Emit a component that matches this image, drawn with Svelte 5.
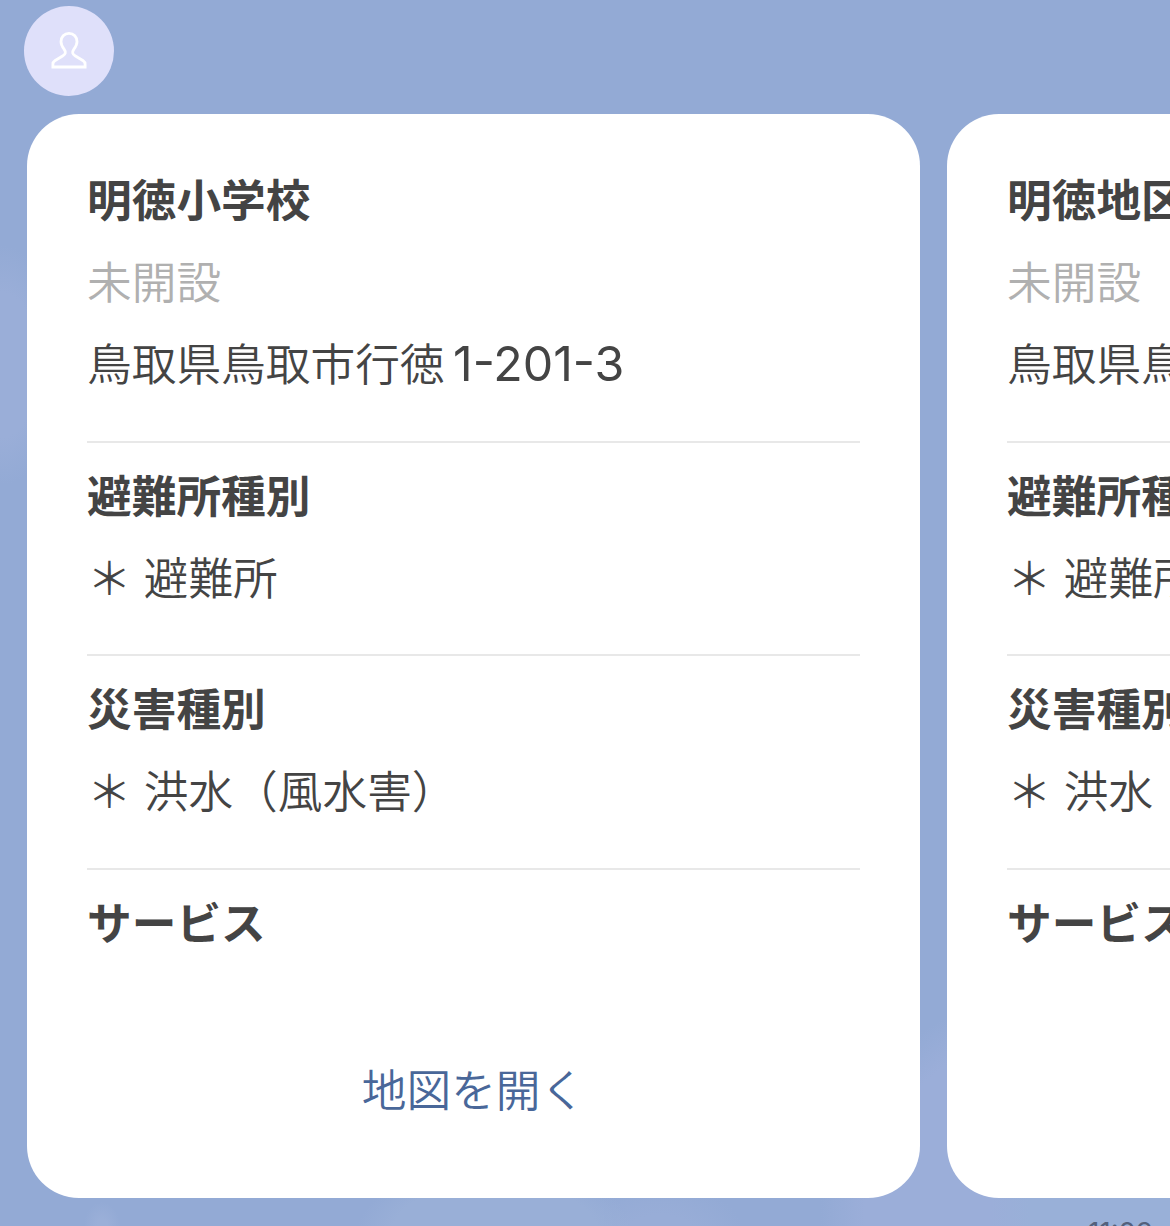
<script lang="ts">
	interface Section {
		title: string;
		items: string[];
	}

	interface Shelter {
		name: string;
		status: string;
		address: string;
		number: string;
		sections: Section[];
	}

	const sections: Section[] = [
		{ title: '避難所種別', items: ['避難所'] },
		{ title: '災害種別', items: ['洪水（風水害）'] },
		{ title: 'サービス', items: [] }
	];

	const shelters: Shelter[] = [
		{ name: '明徳小学校', status: '未開設', address: '鳥取県鳥取市行徳', number: '1-201-3', sections },
		{ name: '明徳地区', status: '未開設', address: '鳥取県鳥取市', number: '', sections }
	];

	const sentAt = '11:09';
</script>

<main class="chat">
	<div class="clouds" aria-hidden="true"></div>

	<header class="sender">
		<div class="avatar">
			<svg viewBox="0 0 90 90" fill="none" stroke="#fff" stroke-width="2.8">
				<path
					d="M45 27.3c-4.8 0-8 3.6-8 8.4 0 3.200 1.200 4.800 3.200 7.700 1 1.400 1.400 2.500 1.100 3.600-.3 1.300-1.100 2.100-2.300 2.800l-8.200 4.900c-1.500.9-1.900 1.900-1.900 3.700v2.600h32.200v-2.600c0-1.800-.4-2.800-1.900-3.700l-8.200-4.900c-1.200-.7-2-1.500-2.300-2.800-.3-1.100.1-2.200 1.100-3.600 2-2.900 3.200-4.500 3.200-7.700 0-4.800-3.200-8.400-8-8.400z"
				/>
			</svg>
		</div>
	</header>

	<div class="carousel">
		{#each shelters as shelter}
			<article class="card">
				<section class="block">
					<h2>{shelter.name}</h2>
					<p class="status">{shelter.status}</p>
					<p>{shelter.address}<span class="number">{shelter.number}</span></p>
				</section>
				{#each shelter.sections as section}
					<section class="block">
						<h2>{section.title}</h2>
						{#each section.items as item}
							<p class="item"><span>＊</span><span>{item}</span></p>
						{/each}
					</section>
				{/each}
				<button type="button">地図を開く</button>
			</article>
		{/each}
	</div>

	<time>{sentAt}</time>
</main>

<style>
	:global(body) {
		margin: 0;
		overflow: hidden;
	}

	.chat {
		position: relative;
		display: flex;
		flex-direction: column;
		box-sizing: border-box;
		width: 1170px;
		height: 1226px;
		padding-top: 6px;
		overflow: hidden;
		background: #93aad5;
		color: #444;
		font-family: 'Noto Sans CJK JP', sans-serif;
		font-size: 44.7px;
	}

	/* faint clouds of the chat wallpaper */
	.clouds {
		position: absolute;
		inset: 0;
		background:
			radial-gradient(ellipse 60px 120px at 2px 365px, #9aaed8 60%, transparent),
			radial-gradient(ellipse 18px 24px at 102px 1226px, #9aafd8 30%, transparent),
			radial-gradient(ellipse 140px 80px at 495px 1240px, #99afd7 75%, transparent 100%),
			radial-gradient(ellipse 90px 70px at 660px 1250px, #98add7 50%, transparent 100%),
			radial-gradient(ellipse 200px 300px at 1170px 1215px, #99b0d8 70%, transparent 90%),
			radial-gradient(ellipse 300px 260px at 1090px 1215px, #9baed9 75%, transparent 90%);
	}

	.sender {
		position: relative;
		display: flex;
		padding-left: 24px;
		margin-bottom: 18px;
	}

	.avatar {
		width: 90px;
		height: 90px;
		border-radius: 50%;
		background: #dfe0fa;
	}

	.avatar svg {
		display: block;
	}

	.carousel {
		position: relative;
		display: flex;
		gap: 27px;
		padding-left: 27px;
	}

	.card {
		display: flex;
		flex: none;
		flex-direction: column;
		box-sizing: border-box;
		width: 893px;
		height: 1084px;
		padding: 57px 60px 83px;
		border-radius: 52px;
		background: #fff;
	}

	.block {
		display: flex;
		flex-direction: column;
		gap: 28px;
		padding-bottom: 51.4px;
	}

	.block:first-child {
		padding-bottom: 52px;
	}

	.block + .block {
		padding-top: 24px;
		border-top: 2px solid #e8e8e8;
	}

	h2,
	p {
		margin: 0;
		font-size: inherit;
		line-height: 54px;
		white-space: nowrap;
	}

	h2 {
		font-weight: 700;
	}

	p {
		font-weight: 350;
	}

	.status {
		color: #b0b0b0;
	}

	.number {
		margin-left: 8.5px;
		font-family: Inter, sans-serif;
		font-size: 48.3px;
		font-weight: 400;
		line-height: 1;
		font-feature-settings: 'case';
	}

	.item {
		display: flex;
		gap: 12px;
	}

	button {
		margin-top: auto;
		padding: 0;
		border: 0;
		background: none;
		color: #496799;
		font: inherit;
		font-weight: 350;
		line-height: 54px;
	}

	time {
		position: relative;
		align-self: flex-end;
		margin: 18px 17px 0 0;
		color: #53607c;
		font-family: Inter, sans-serif;
		font-size: 27.5px;
		line-height: 32px;
	}
</style>
